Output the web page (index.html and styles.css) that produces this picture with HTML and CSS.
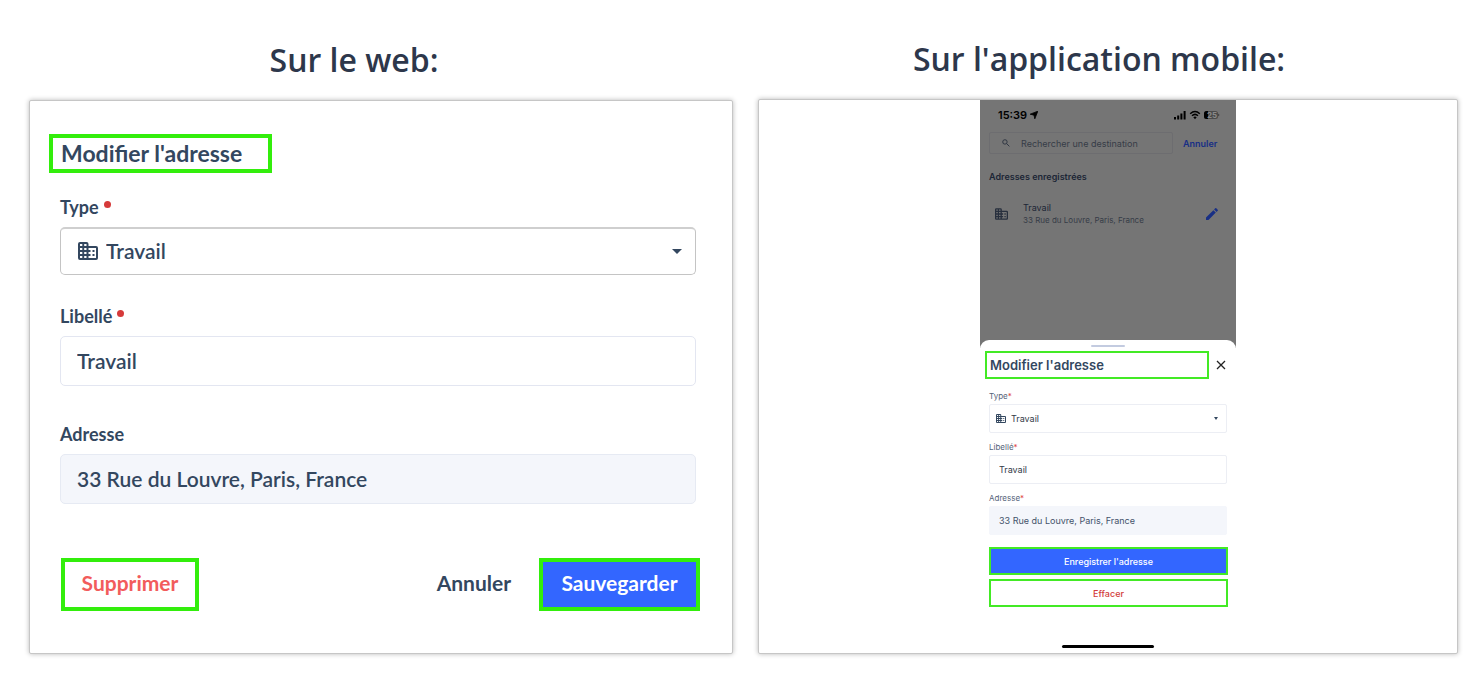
FILE: index.html
```
<!DOCTYPE html>
<html lang="fr">
<head>
<meta charset="utf-8">
<title>Modifier l'adresse</title>
<link rel="stylesheet" href="styles.css">
</head>
<body>
<svg class="sprite" aria-hidden="true">
  <symbol id="building" viewBox="0 0 20 18">
    <path fill="currentColor" fill-rule="evenodd" d="M2 0h6.500a2 2 0 0 1 2 2v2H18a2 2 0 0 1 2 2v10a2 2 0 0 1-2 2H2a2 2 0 0 1-2-2V2a2 2 0 0 1 2-2zM2 2v2h2.300V2zM6.200 2v2h2.300V2zM2 6v2h2.300V6zM6.200 6v2h2.300V6zM2 10v2h2.300v-2zM6.200 10v2h2.300v-2zM2 14v2h2.300v-2zM6.200 14v2h2.300v-2zM10.500 6v2h2v2h-2v2h2v2h-2v2H18V6zM14.500 8h2v2h-2zM14.500 12h2v2h-2z"/>
  </symbol>
</svg>
<main class="compare">
  <section class="column">
    <h1 class="caption caption-web">Sur le web:</h1>
    <form class="card web">
      <h2 class="web-title mark">Modifier l'adresse</h2>
      <div class="web-fields">
        <div class="field">
          <label class="label" for="web-type">Type <i class="dot"></i></label>
          <div class="picker">
            <svg class="picker-icon"><use href="#building"/></svg>
            <select class="control control-select" id="web-type"><option>Travail</option></select>
            <svg class="picker-arrow" viewBox="0 0 10 5"><path d="M0 0h10L5 5z" fill="currentColor"/></svg>
          </div>
        </div>
        <div class="field">
          <label class="label" for="web-name">Libellé <i class="dot"></i></label>
          <input class="control" id="web-name" type="text" value="Travail">
        </div>
        <div class="field field-last">
          <label class="label" for="web-address">Adresse</label>
          <input class="control control-filled" id="web-address" type="text" value="33 Rue du Louvre, Paris, France" readonly>
        </div>
      </div>
      <div class="actions">
        <button class="btn btn-delete mark" type="button">Supprimer</button>
        <button class="btn btn-cancel" type="button">Annuler</button>
        <button class="btn btn-save mark" type="button">Sauvegarder</button>
      </div>
    </form>
  </section>

  <section class="column">
    <h1 class="caption caption-mobile">Sur l'application mobile:</h1>
    <div class="card mobile">
      <div class="phone">
        <div class="screen">
          <div class="status">
            <span>15:39</span>
            <svg class="locate" viewBox="0 0 10 10"><path d="M9.800.2 6 9.800 5 5.200.2 4z"/></svg>
            <svg class="signals" viewBox="0 0 46 10">
              <path d="M0 7h2v2.500H0zM3.200 5.500h2v4h-2zM6.400 3.500h2v6h-2zM9.600 1h2v8.500h-2z"/>
              <g fill="none" stroke="#000" stroke-width="1.500"><path d="M16.200 3.700q4.800-4.400 9.600 0M18 5.700q3-2.700 6 0"/></g>
              <path d="M19.300 7.200q1.700-1.300 3.400 0L21 9.200z"/>
              <rect x="30" y="1" width="14" height="8" rx="2.500" fill="#4b4b4b"/>
              <path d="M32.500 1H34v8h-1.500A2.500 2.500 0 0 1 30 6.500v-3A2.500 2.500 0 0 1 32.500 1zM44.600 3.500q1.400 1.500 0 3z"/>
              <text x="33" y="8" class="battery-text">25</text>
            </svg>
          </div>
          <div class="search-row">
            <label class="search">
              <svg class="lens" viewBox="0 0 9 9"><circle cx="3.300" cy="3.300" r="2.500"/><path d="m5.200 5.200 3.100 3.100"/></svg>
              <input class="search-input" type="text" placeholder="Rechercher une destination" aria-label="Rechercher une destination">
            </label>
            <a class="search-cancel" href="#">Annuler</a>
          </div>
          <h2 class="saved-title">Adresses enregistrées</h2>
          <div class="saved">
            <svg class="saved-icon"><use href="#building"/></svg>
            <div class="saved-text">
              <div class="saved-name">Travail</div>
              <div class="saved-address">33 Rue du Louvre, Paris, France</div>
            </div>
            <button class="icon-btn" type="button" aria-label="Modifier">
              <svg class="pencil" viewBox="0 0 12 12"><path d="M0 9.500V12h2.500L9.800 4.600 7.400 2.200zM11.700 2.800a.8.8 0 0 0 0-1.100L10.300.3a.8.8 0 0 0-1.100 0L8.100 1.400l2.500 2.500z"/></svg>
            </button>
          </div>
        </div>
        <form class="sheet">
          <div class="handle"></div>
          <div class="sheet-head">
            <h2 class="sheet-title mark-thin">Modifier l'adresse</h2>
            <button class="icon-btn" type="button" aria-label="Fermer">
              <svg class="close" viewBox="0 0 10 10"><path d="m1 1 8 8M9 1 1 9"/></svg>
            </button>
          </div>
          <div class="m-field">
            <label class="m-label" for="m-type">Type<b class="star">*</b></label>
            <div class="picker">
              <svg class="m-picker-icon"><use href="#building"/></svg>
              <select class="m-control m-control-select" id="m-type"><option>Travail</option></select>
              <svg class="m-picker-arrow" viewBox="0 0 4 3"><path d="M0 0h4L2 3z" fill="currentColor"/></svg>
            </div>
          </div>
          <div class="m-field">
            <label class="m-label" for="m-name">Libellé<b class="star">*</b></label>
            <input class="m-control" id="m-name" type="text" value="Travail">
          </div>
          <div class="m-field">
            <label class="m-label" for="m-address">Adresse<b class="star">*</b></label>
            <input class="m-control m-control-filled" id="m-address" type="text" value="33 Rue du Louvre, Paris, France" readonly>
          </div>
          <div class="m-actions">
            <button class="m-btn m-save mark-thin" type="button">Enregistrer l'adresse</button>
            <button class="m-btn m-delete mark-thin" type="button">Effacer</button>
          </div>
          <div class="home"></div>
        </form>
      </div>
    </div>
  </section>
</main>
</body>
</html>
```
FILE: styles.css
```
* { box-sizing: border-box; }
body {
  margin: 0;
  background: #fff;
  color: #33475f;
  font-family: Lato, "Open Sans", sans-serif;
}
h1, h2 { margin: 0; }
button, input, select { font: inherit; color: inherit; margin: 0; }
svg { display: block; }
.sprite { position: absolute; width: 0; height: 0; }

.compare {
  display: grid;
  grid-template-columns: 704fr 700fr;
  gap: 25px;
  padding: 36px 22px 33px 29px;
}
.column { display: flex; flex-direction: column; }
.caption {
  font: 600 32px/48px "Open Sans", sans-serif;
  color: #2d374b;
  text-align: center;
}
.caption-web { padding: 0 54px 16px 0; }
.caption-mobile { padding: 0 18px 16px 0; margin-top: -1px; }
.card {
  flex: 1;
  background: #fff;
  border: 1px solid #c6c6c6;
  border-radius: 2px;
  box-shadow: 0 0 5px rgba(0, 0, 0, .28);
}
.mark { border: 4px solid #33ee0c; }
.mark-thin { border: 2px solid #43ea25; }

/* Web form */
.web { padding: 33px 32px 42px 19px; }
.web-title {
  width: 223px;
  padding-left: 8px;
  font-size: 23px;
  line-height: 31px;
  font-weight: 700;
  white-space: nowrap;
}
.web-fields { padding: 22px 4px 0 11px; }
.field { margin-bottom: 36px; }
.field:first-child { margin-bottom: 29px; }
.field-last { margin-bottom: 54px; }
.label {
  display: flex;
  gap: 5px;
  margin-bottom: 8px;
  font-size: 18px;
  line-height: 24px;
  font-weight: 700;
}
.dot {
  width: 7px;
  height: 7px;
  margin-top: 6px;
  border-radius: 50%;
  background: #d63a3a;
}
.control {
  display: block;
  width: 100%;
  height: 50px;
  padding: 0 16px 2px;
  border: 1px solid #e3e6f1;
  border-radius: 5px;
  background: #fff;
  font-size: 21px;
  font-weight: 600;
  outline: none;
}
.control-select {
  height: 48px;
  padding: 0 40px 3px 45px;
  border: 1px solid #c4c4c4;
  border-top: 2px solid #cfcfcf;
  appearance: none;
}
.control-filled { background: #f4f6fb; border-color: #e6eaf3; }
.picker { position: relative; }
.picker-icon { position: absolute; left: 18px; top: 15px; width: 20px; height: 18px; pointer-events: none; }
.picker-arrow { position: absolute; right: 14px; top: 22px; width: 10px; height: 5px; pointer-events: none; }
.actions { display: flex; padding-left: 12px; }
.btn {
  height: 53px;
  padding: 0 0 4px;
  background: none;
  font-size: 21px;
  font-weight: 700;
}
.btn-delete { width: 138px; color: #f25c5c; }
.btn-cancel { margin-left: auto; padding: 0 28px 4px; border: 0; }
.btn-save { width: 161px; background: #3366ff; color: #fff; }

/* Mobile app */
.mobile { display: flex; justify-content: center; }
.phone {
  width: 256px;
  display: flex;
  flex-direction: column;
  font-family: Inter, sans-serif;
  font-size: 9px;
}
.screen { height: 248px; padding: 6px 9px 0; background: #757575; color: #1c2636; }
.status {
  display: flex;
  align-items: center;
  gap: 3px;
  padding: 0 7px 0 9px;
  font-size: 11px;
  line-height: 18px;
  font-weight: 600;
  color: #000;
}
.locate { width: 8px; height: 8px; stroke: #000; }
.signals { width: 46px; height: 10px; margin-left: auto; }
.battery-text { font: 700 8px Inter, sans-serif; fill: #8a8a8a; }
.search-row { display: flex; align-items: center; gap: 10px; margin-top: 8px; }
.search {
  flex: 0 0 184px;
  display: flex;
  align-items: center;
  gap: 11px;
  height: 22px;
  padding-left: 12px;
  border: 1px solid #6d6d70;
  border-radius: 2px;
}
.lens { width: 8px; height: 8px; fill: none; stroke: #272f3d; }
.search-input { flex: 1; min-width: 0; padding: 0; border: 0; background: none; outline: none; }
.search-input::placeholder { color: #363c47; opacity: 1; }
.search-cancel { color: #182f85; font-weight: 600; text-decoration: none; }
.saved-title { margin-top: 17px; font-size: 9px; line-height: 12px; font-weight: 600; }
.saved { display: flex; align-items: center; margin-top: 19px; padding: 0 9px 0 6px; }
.saved-icon { width: 13px; height: 12px; color: #272f3d; }
.saved-text { flex: 1; padding-left: 15px; }
.saved-name { font-size: 9px; line-height: 12px; }
.saved-address { font-size: 8px; line-height: 12px; color: #363c47; }
.icon-btn { padding: 0; border: 0; background: none; }
.pencil { width: 12px; height: 12px; fill: #182f85; }

.sheet {
  flex: 1;
  position: relative;
  margin-top: -8px;
  padding: 5px 9px 5px;
  border-radius: 9px 9px 0 0;
  background: #fff;
}
.handle { width: 34px; height: 2px; margin: 0 auto; border-radius: 1px; background: #c3cbe0; }
.sheet-head {
  display: flex;
  align-items: center;
  justify-content: space-between;
  margin: 4px 1px 11px -4px;
}
.sheet-title {
  width: 224px;
  height: 28px;
  padding-left: 3px;
  font-size: 13px;
  line-height: 25px;
  font-weight: 600;
}
.close { width: 10px; height: 10px; fill: none; stroke: #222; stroke-width: 1.300; }
.m-field { margin-bottom: 8px; }
.m-label { display: block; margin-bottom: 2px; font-size: 8px; line-height: 12px; color: #55647a; }
.star { color: #e04545; font-weight: 400; }
.m-control {
  display: block;
  width: 100%;
  height: 29px;
  padding: 0 9px;
  border: 1px solid #eceef4;
  border-radius: 2px;
  background: #fff;
  color: #333b48;
  font-size: 9px;
  outline: none;
}
.m-control-select { padding: 0 20px 0 21px; appearance: none; }
.m-control-filled { background: #f4f6fb; border-color: #f4f6fb; color: #43526a; }
.m-picker-icon { position: absolute; left: 7px; top: 10px; width: 10px; height: 9px; pointer-events: none; }
.m-picker-arrow { position: absolute; right: 9px; top: 13px; width: 4px; height: 3px; pointer-events: none; }
.m-actions { display: flex; flex-direction: column; gap: 4px; margin: 12px -1px 38px 0; }
.m-btn { height: 28px; padding: 0; background: #fff; font-size: 9px; font-weight: 500; }
.m-save { background: #3366ff; color: #fff; }
.m-delete { color: #d23c3c; }
.home { width: 92px; height: 3px; margin: 0 auto; border-radius: 2px; background: #000; }
```
